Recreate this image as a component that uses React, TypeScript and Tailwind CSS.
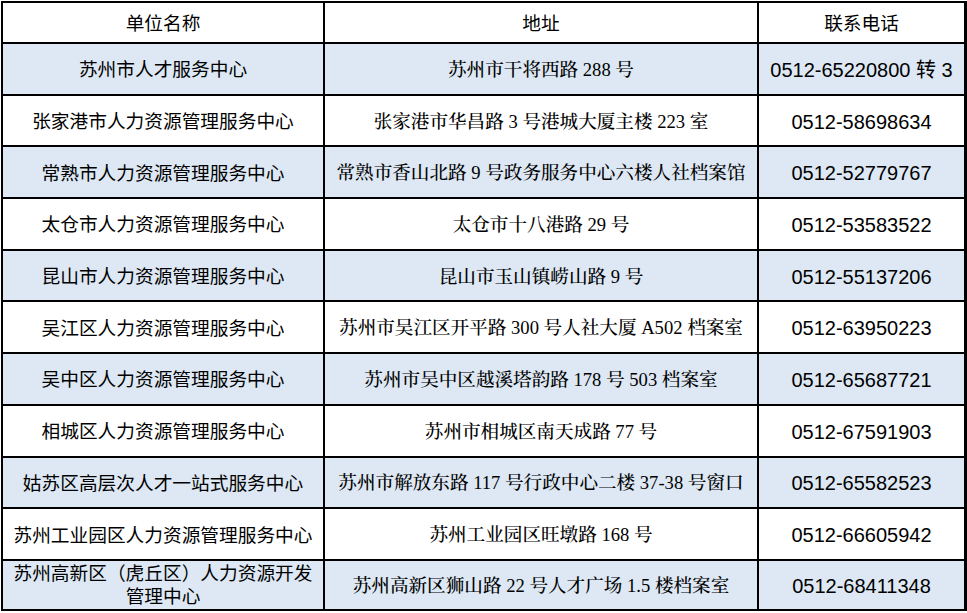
const rows: [string, string, string][] = [
  ["苏州市人才服务中心", "苏州市干将西路 288 号", "0512-65220800 转 3"],
  ["张家港市人力资源管理服务中心", "张家港市华昌路 3 号港城大厦主楼 223 室", "0512-58698634"],
  ["常熟市人力资源管理服务中心", "常熟市香山北路 9 号政务服务中心六楼人社档案馆", "0512-52779767"],
  ["太仓市人力资源管理服务中心", "太仓市十八港路 29 号", "0512-53583522"],
  ["昆山市人力资源管理服务中心", "昆山市玉山镇崂山路 9 号", "0512-55137206"],
  ["吴江区人力资源管理服务中心", "苏州市吴江区开平路 300 号人社大厦 A502 档案室", "0512-63950223"],
  ["吴中区人力资源管理服务中心", "苏州市吴中区越溪塔韵路 178 号 503 档案室", "0512-65687721"],
  ["相城区人力资源管理服务中心", "苏州市相城区南天成路 77 号", "0512-67591903"],
  ["姑苏区高层次人才一站式服务中心", "苏州市解放东路 117 号行政中心二楼 37-38 号窗口", "0512-65582523"],
  ["苏州工业园区人力资源管理服务中心", "苏州工业园区旺墩路 168 号", "0512-66605942"],
  ["苏州高新区（虎丘区）人力资源开发管理中心", "苏州高新区狮山路 22 号人才广场 1.5 楼档案室", "0512-68411348"],
];

const sans = "font-['Liberation_Sans','Noto_Sans_CJK_SC',sans-serif]";
const serif = "font-['Liberation_Serif','Noto_Serif_CJK_SC','Noto_Sans_CJK_SC',serif]";

export default function App() {
  return (
    <div className="h-[613px] w-[967px] bg-white pl-px pt-px">
      <div className="grid w-[966px] grid-cols-[320px_432px_205px] grid-rows-[39px_repeat(10,49.7px)_48px] gap-[2px] bg-black p-[2px] text-black">
        <div className={`flex items-center justify-center bg-white pt-1 text-[18.7px] ${sans}`}>单位名称</div>
        <div className={`flex items-center justify-center bg-white pt-1 text-[18.7px] ${sans}`}>地址</div>
        <div className={`flex items-center justify-center bg-white pt-1 text-[18.7px] ${sans}`}>联系电话</div>
        {rows.map(([name, addr, phone], i) => {
          const bg = i % 2 === 0 ? "bg-[#dde8f4]" : "bg-white";
          const last = i === rows.length - 1;
          return [
            <div
              key={`n${i}`}
              className={`flex items-center justify-center whitespace-nowrap pt-0.5 text-center text-[18.7px] leading-[23px] ${sans} ${bg}`}
            >
              {last ? (
                <span className="-mt-0.5">
                  苏州高新区（虎丘区）人力资源开发
                  <br />
                  管理中心
                </span>
              ) : (
                name
              )}
            </div>,
            <div
              key={`a${i}`}
              className={`flex items-center justify-center whitespace-pre pt-0.5 text-[18.6px] font-medium ${serif} ${bg}`}
            >
              {addr}
            </div>,
            <div key={`p${i}`} className={`flex items-center justify-center pt-0.5 text-[20px] ${sans} ${bg}`}>
              {phone}
            </div>,
          ];
        })}
      </div>
    </div>
  );
}
